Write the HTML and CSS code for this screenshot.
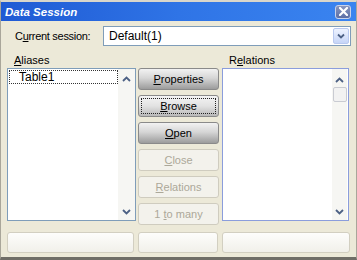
FILE: index.html
```html
<!DOCTYPE html>
<html lang="en">
  <head>
    <meta charset="UTF-8" />
    <title>Data Session</title>
    <link rel="stylesheet" href="styles.css">
  </head>
  <body>
    <div class="window">
      <div class="titlebar">
        <span class="title">Data Session</span>
        <span class="close-btn">
          <svg width="9" height="9" viewBox="0 0 9 9">
            <path d="M1 1 L8 8 M8 1 L1 8" stroke="#fff" stroke-width="2.2" stroke-linecap="square" />
          </svg>
        </span>
      </div>

      <div class="content">
        <div class="session-row">
          <span class="session-label">C<u>u</u>rrent session:</span>
          <div class="combo">
            <span class="combo-text">Default(1)</span>
            <span class="combo-btn">
              <svg width="8" height="6" viewBox="0 0 8 6">
                <path d="M1 1.5 L4 4.5 L7 1.5" fill="none" stroke="#4d6185" stroke-width="1.8" />
              </svg>
            </span>
          </div>
        </div>

        <div class="main">
          <div class="col-label"><u>A</u>liases</div>
          <div></div>
          <div class="col-label rel-label">R<u>e</u>lations</div>

          <div class="listbox aliases">
            <div class="list-items">
              <div class="item focused">Table1</div>
            </div>
            <div class="scroll">
              <svg class="chev" width="9" height="6" viewBox="0 0 9 6">
                <path d="M1 5 L4.5 1.5 L8 5" fill="none" stroke="#4d6185" stroke-width="1.8" />
              </svg>
              <svg class="chev" width="9" height="6" viewBox="0 0 9 6">
                <path d="M1 1 L4.5 4.5 L8 1" fill="none" stroke="#4d6185" stroke-width="1.8" />
              </svg>
            </div>
          </div>

          <div class="buttons">
            <button class="btn"><u>P</u>roperties</button>
            <button class="btn focus"><span class="focus-ring"><u>B</u>rowse</span></button>
            <button class="btn"><u>O</u>pen</button>
            <button class="btn disabled"><u>C</u>lose</button>
            <button class="btn disabled"><u>R</u>elations</button>
            <button class="btn disabled">1 <u>t</u>o many</button>
          </div>

          <div class="listbox relations">
            <div class="list-items"></div>
            <div class="scroll">
              <div class="scroll-top">
                <svg class="chev" width="9" height="6" viewBox="0 0 9 6">
                  <path d="M1 5 L4.5 1.5 L8 5" fill="none" stroke="#4d6185" stroke-width="1.8" />
                </svg>
                <span class="thumb"></span>
              </div>
              <svg class="chev" width="9" height="6" viewBox="0 0 9 6">
                <path d="M1 1 L4.5 4.5 L8 1" fill="none" stroke="#4d6185" stroke-width="1.8" />
              </svg>
            </div>
          </div>
        </div>

        <div class="bottom-row">
          <button class="btn blank"></button>
          <button class="btn blank"></button>
          <button class="btn blank"></button>
        </div>
      </div>
    </div>
  </body>
</html>
```

FILE: styles.css
```css
body {
  margin: 0;
  padding: 0;
  font-family: "Liberation Sans", Arial, sans-serif;
  font-size: 11px;
  color: #000;
  background-color: #ece9d8;
}

.window {
  width: 357px;
  height: 260px;
  box-sizing: border-box;
  background-color: #ece9d8;
  border-left: 1px solid #a9a69a;
  border-right: 1px solid #a9a69a;
  border-bottom: 3px solid #6f6d66;
  border-top: 2px solid #d9d6cb;
  display: flex;
  flex-direction: column;
}

/* Title bar */
.titlebar {
  height: 19px;
  display: flex;
  align-items: center;
  justify-content: space-between;
  padding: 0 5px 0 4px;
  background: linear-gradient(to right, #1f5ad4, #2f74e6 50%, #3a84f0);
}

.title {
  color: #fff;
  font-weight: bold;
  font-style: italic;
  font-size: 11.5px;
}

.close-btn {
  width: 14px;
  height: 12px;
  display: flex;
  align-items: center;
  justify-content: center;
  border: 1px solid #c8d2ea;
  border-radius: 3px;
  background: linear-gradient(#8795be, #5c6fa6);
}

/* Session row */
.content {
  flex: 1;
  display: flex;
  flex-direction: column;
}

.session-row {
  display: flex;
  align-items: center;
  margin-top: 5px;
  padding-left: 14px;
}

.session-label {
  width: 88px;
  letter-spacing: -0.3px;
}

.combo {
  width: 248px;
  height: 20px;
  box-sizing: border-box;
  border: 1px solid #7f9db9;
  background-color: #fff;
  display: flex;
  align-items: center;
  justify-content: space-between;
  padding: 0 1px 0 5px;
  font-size: 12px;
}

.combo-btn {
  width: 16px;
  height: 16px;
  box-sizing: border-box;
  border: 1px solid #b9c9ef;
  border-radius: 2px;
  background: linear-gradient(#eef3ff, #c6d5f7);
  display: flex;
  align-items: center;
  justify-content: center;
}

/* Lists and buttons */
.main {
  display: grid;
  grid-template-columns: 129px 81px 128px;
  grid-template-rows: 14px 157px;
  column-gap: 2px;
  margin-top: 8px;
  padding-left: 6px;
}

.col-label {
  padding-left: 7px;
  line-height: 12px;
}

.rel-label {
  margin-left: 1px;
}

.listbox {
  height: 153px;
  box-sizing: border-box;
  border: 1px solid #7f9db9;
  background-color: #fff;
  display: flex;
}

.listbox.relations {
  margin-left: 1px;
  border-color: #8b9ddc;
}

.list-items {
  flex: 1;
  padding: 1px 0 0 1px;
}

.item {
  height: 14px;
  line-height: 14px;
  padding-left: 10px;
  font-size: 12px;
}

.item.focused {
  outline: 1px dotted #333;
  outline-offset: -1px;
}

.scroll {
  width: 17px;
  background-color: #f6f6f3;
  display: flex;
  flex-direction: column;
  align-items: center;
  justify-content: space-between;
  padding: 7px 0 5px;
}

.relations .scroll {
  width: 15px;
  margin-right: 1px;
  padding-top: 8px;
}

.scroll-top {
  display: flex;
  flex-direction: column;
  align-items: center;
  gap: 4px;
}

.thumb {
  width: 12px;
  height: 13px;
  border: 1px solid #c9cbd2;
  border-radius: 2px;
  background-color: #f2f2f2;
}

.buttons {
  display: flex;
  flex-direction: column;
  gap: 5px;
}

.btn {
  height: 22px;
  box-sizing: border-box;
  font-family: "Liberation Sans", Arial, sans-serif;
  font-size: 11px;
  color: #000;
  border: 1px solid #8a8a8a;
  border-radius: 3px;
  background: linear-gradient(#f2f2f2, #d6d6d6 45%, #9c9c9c);
  padding: 0;
  cursor: pointer;
}

.btn.focus {
  background: linear-gradient(#f4f4f4, #e2e2e2 50%, #b8b8b8);
  padding: 2px;
}

.focus-ring {
  display: block;
  height: 100%;
  box-sizing: border-box;
  line-height: 14px;
  border: 1px dotted #222;
}

.btn.disabled {
  color: #aca899;
  border-color: #cfccbf;
  background: #f3f2ec;
}

/* Bottom row */
.bottom-row {
  display: grid;
  grid-template-columns: 127px 80px 128px;
  column-gap: 4px;
  margin-top: 7px;
  padding-left: 6px;
}

.btn.blank {
  height: 21px;
  border-color: #d2cfc1;
  background: linear-gradient(#fdfdfb, #f1f0ea);
}
```
